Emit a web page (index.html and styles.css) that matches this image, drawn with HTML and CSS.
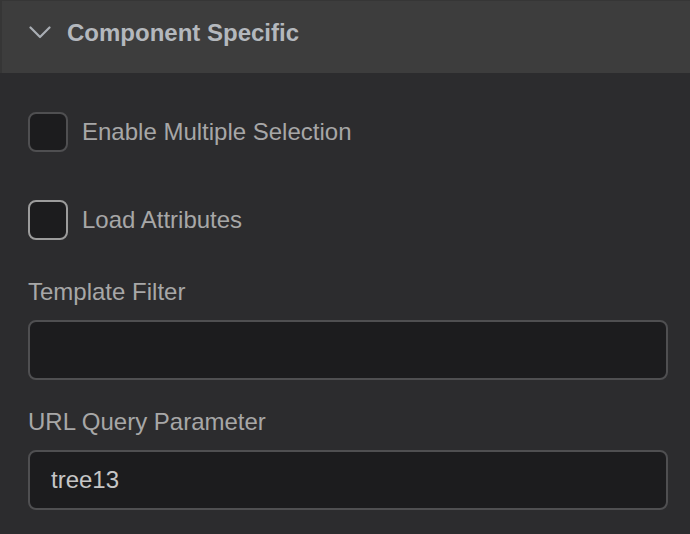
FILE: index.html
```html
<!DOCTYPE html>
<html lang="en">
<head>
<meta charset="utf-8">
<title>Component Specific</title>
<link rel="stylesheet" href="styles.css">
</head>
<body>
<section class="panel">
  <header class="panel-header">
    <svg class="chevron" width="22" height="13" viewBox="0 0 22 13" aria-hidden="true">
      <path d="M1.5 1.5 L11 11 L20.5 1.5" fill="none" stroke="#a9aeb4" stroke-width="2.2" stroke-linecap="round" stroke-linejoin="round"/>
    </svg>
    <h2 class="panel-title">Component Specific</h2>
  </header>
  <div class="panel-body">
    <label class="check-row first">
      <span class="checkbox"></span>
      <span class="check-label">Enable Multiple Selection</span>
    </label>
    <label class="check-row second">
      <span class="checkbox focused"></span>
      <span class="check-label">Load Attributes</span>
    </label>
    <div class="field first-field">
      <div class="field-label">Template Filter</div>
      <div class="text-input"></div>
    </div>
    <div class="field">
      <div class="field-label">URL Query Parameter</div>
      <div class="text-input">tree13</div>
    </div>
  </div>
</section>
</body>
</html>
```

FILE: styles.css
```css
html, body {
  margin: 0;
  padding: 0;
  background: #2c2c2e;
}
body {
  width: 690px;
  height: 534px;
  overflow: hidden;
  font-family: "Liberation Sans", Arial, Helvetica, sans-serif;
}
.panel {
  display: flex;
  flex-direction: column;
}
.panel-header {
  box-sizing: border-box;
  height: 73px;
  padding: 0 0 8px 29px;
  display: flex;
  align-items: center;
  gap: 16px;
  background: #3d3d3d;
  box-shadow: inset 2px 1px 0 #363636;
}
.chevron {
  display: block;
  flex: none;
}
.panel-title {
  margin: 0;
  font-size: 24px;
  line-height: 28px;
  font-weight: bold;
  color: #b4b8bd;
}
.panel-body {
  padding: 0 22px 0 28px;
  display: flex;
  flex-direction: column;
}
.check-row {
  display: flex;
  align-items: center;
  gap: 14px;
  height: 40px;
}
.check-row.first {
  margin-top: 39px;
}
.check-row.second {
  margin-top: 48px;
}
.checkbox {
  box-sizing: border-box;
  width: 40px;
  height: 40px;
  border: 2px solid #4f4f51;
  border-radius: 8px;
  background: #1c1c1e;
  flex: none;
}
.checkbox.focused {
  border-color: #9c9c9c;
}
.check-label {
  font-size: 24px;
  line-height: 28px;
  color: #a7a7a7;
}
.field {
  display: flex;
  flex-direction: column;
  gap: 14px;
  margin-top: 28px;
}
.field.first-field {
  margin-top: 38px;
}
.field-label {
  font-size: 24px;
  line-height: 28px;
  color: #a7a7a7;
}
.text-input {
  box-sizing: border-box;
  height: 60px;
  border: 2px solid #4f4f51;
  border-radius: 8px;
  background: #1c1c1e;
  padding: 0 21px;
  display: flex;
  align-items: center;
  font-size: 24px;
  line-height: 28px;
  color: #c6c6c6;
}
```
